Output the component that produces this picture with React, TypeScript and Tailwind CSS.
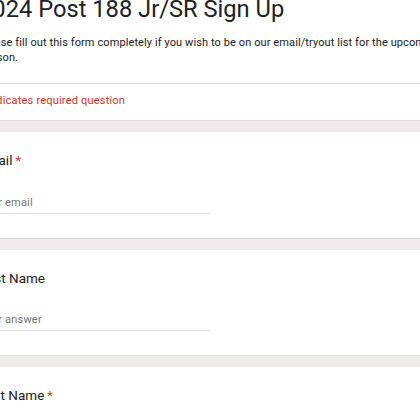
export default function App() {
  return (
    <div className="h-[420px] w-[420px] overflow-hidden bg-[#efebeb] font-['Roboto',sans-serif] text-[#202124]">
      <div className="-ml-[21px] w-[480px]">
        <section className="bg-white">
          <h1 className="-mt-[7px] text-[23.7px] leading-[32px] text-[#202124]">2024 Post 188 Jr/SR Sign Up</h1>
          <p className="mt-[10px] pb-[18px] text-[11px] leading-[15px] tracking-[0.1px] whitespace-nowrap">
            Please fill out this form completely if you wish to be on our email/tryout list for the upcoming
            <br />
            season.
          </p>
          <div className="border-t border-[#dadce0] pt-[9px] pb-[12px] text-[11px] leading-[15px] tracking-[0.2px] text-[#d93025]">
            * Indicates required question
          </div>
        </section>

        <div className="h-[12px] border-t border-[#dedede]" />
        <Question label="Email" required placeholder="Your email" />
        <div className="h-[12px] border-t border-[#dedede]" />
        <Question label="First Name" placeholder="Your answer" />
        <div className="h-[12px] border-t border-[#dedede]" />
        <Question label="Last Name" required placeholder="Your answer" />
      </div>
    </div>
  );
}

function Question({ label, required, placeholder }: { label: string; required?: boolean; placeholder: string }) {
  return (
    <section className="bg-white pt-[18px] pb-[24px]">
      <div className="text-[13.5px] leading-[20px]">
        {label}
        {required && <span className="ml-[3px] text-[13px] text-[#d93025]">*</span>}
      </div>
      <div className="mt-[24px] w-[231px] border-b border-[#e0e0e0] pb-[2px] text-[11px] leading-[16px] tracking-[0.2px] text-[#70757a]">
        {placeholder}
      </div>
    </section>
  );
}
